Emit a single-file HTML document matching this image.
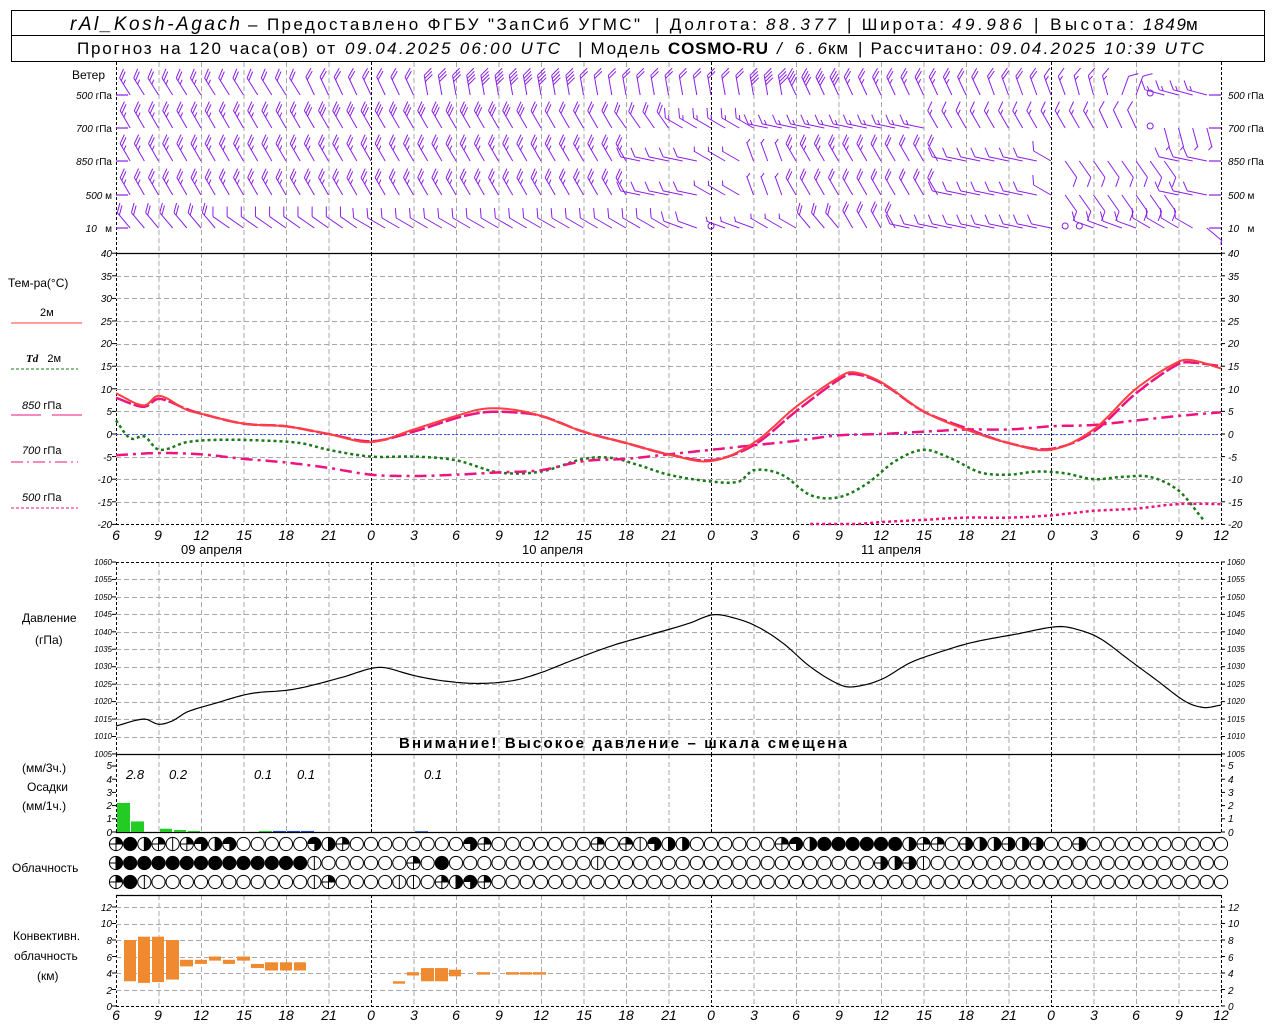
<!DOCTYPE html>
<html><head><meta charset="utf-8"><style>
html,body{margin:0;padding:0;background:#fff;}
svg{display:block;}
text{font-family:"Liberation Sans",sans-serif;fill:#000;}
.it{font-style:italic;}
.sm{font-size:10px;font-style:italic;}
.tl{font-size:14px;font-style:italic;text-anchor:middle;}
.lab{font-size:12px;}
</style></head><body>
<svg id="s" width="1280" height="1024" viewBox="0 0 1280 1024" xmlns="http://www.w3.org/2000/svg">
<rect x="0" y="0" width="1280" height="1024" fill="#fff"/>
<rect x="11.5" y="10.5" width="1253" height="51" fill="none" stroke="#000"/>
<line x1="11" y1="35.5" x2="1265" y2="35.5" stroke="#000"/>
<g font-size="17">
<text x="70" y="30" font-family="Liberation Serif" class="it" font-size="19" textLength="170">rAl_Kosh-Agach</text>
<text x="248" y="30" textLength="392">– Предоставлено ФГБУ "ЗапСиб УГМС"</text>
<text x="655" y="30" textLength="102">| Долгота:</text>
<text x="766" y="30" class="it" textLength="70">88.377</text>
<text x="847" y="30" textLength="97">| Широта:</text>
<text x="952" y="30" class="it" textLength="70">49.986</text>
<text x="1034" y="30" textLength="100">| Высота:</text>
<text x="1143" y="30" class="it" textLength="43">1849</text>
<text x="1186" y="30" textLength="14">м</text>
<text x="77" y="54" textLength="258">Прогноз на 120 часа(ов) от</text>
<text x="345" y="54" class="it" textLength="215">09.04.2025 06:00 UTC</text>
<text x="578" y="54" textLength="82">| Модель</text>
<text x="668" y="54" font-family="Liberation Serif" font-weight="bold" textLength="100">COSMO-RU</text>
<text x="777" y="54" class="it" textLength="50">/ 6.6</text>
<text x="828" y="54" textLength="20">км</text>
<text x="858" y="54" textLength="125">| Рассчитано:</text>
<text x="990" y="54" class="it" textLength="214">09.04.2025 10:39 UTC</text>
</g>
<g id="grid"></g>
<g id="data"></g>
<g class="sm">
<text x="72" y="79" font-style="normal" font-size="12">Ветер</text>
<text x="112" y="99" text-anchor="end">500 <tspan font-style="normal">гПа</tspan></text>
<text x="112" y="132" text-anchor="end">700 <tspan font-style="normal">гПа</tspan></text>
<text x="112" y="165" text-anchor="end">850 <tspan font-style="normal">гПа</tspan></text>
<text x="112" y="199" text-anchor="end">500 <tspan font-style="normal">м</tspan></text>
<text x="112" y="232" text-anchor="end">10 &#160; <tspan font-style="normal">м</tspan></text>
<text x="1228" y="99">500 <tspan font-style="normal">гПа</tspan></text>
<text x="1228" y="132">700 <tspan font-style="normal">гПа</tspan></text>
<text x="1228" y="165">850 <tspan font-style="normal">гПа</tspan></text>
<text x="1228" y="199">500 <tspan font-style="normal">м</tspan></text>
<text x="1228" y="232">10 &#160; <tspan font-style="normal">м</tspan></text>
</g>
<g class="lab">
<text x="8" y="287">Тем-ра(°С)</text>
<text x="40" y="316" font-size="11">2м</text>
<text x="26" y="362" font-size="11"><tspan font-family="Liberation Serif" font-style="italic" font-weight="bold">Td</tspan> &#160; 2м</text>
<text x="22" y="409" font-size="11"><tspan font-style="italic">850</tspan> гПа</text>
<text x="22" y="454" font-size="11"><tspan font-style="italic">700</tspan> гПа</text>
<text x="22" y="501" font-size="11"><tspan font-style="italic">500</tspan> гПа</text>
</g>
<line x1="11" y1="323" x2="82" y2="323" stroke="#ff4040" stroke-width="1"/>
<line x1="11" y1="369" x2="78" y2="369" stroke="#1a7a1a" stroke-dasharray="3,2"/>
<line x1="11" y1="415" x2="41" y2="415" stroke="#ee1480"/><line x1="52" y1="415" x2="82" y2="415" stroke="#ee1480"/>
<line x1="11" y1="462" x2="78" y2="462" stroke="#ee1480" stroke-dasharray="12,4,2,4"/>
<line x1="11" y1="508" x2="78" y2="508" stroke="#ee1480" stroke-dasharray="3,2"/>
<g class="sm" text-anchor="end">
<text x="112" y="257">40</text><text x="112" y="280">35</text><text x="112" y="302">30</text><text x="112" y="325">25</text><text x="112" y="347">20</text><text x="112" y="370">15</text><text x="112" y="393">10</text><text x="112" y="415">5</text><text x="112" y="438">0</text><text x="112" y="461">-5</text><text x="112" y="483">-10</text><text x="112" y="506">-15</text><text x="112" y="528">-20</text>
</g>
<g class="sm">
<text x="1228" y="257">40</text><text x="1228" y="280">35</text><text x="1228" y="302">30</text><text x="1228" y="325">25</text><text x="1228" y="347">20</text><text x="1228" y="370">15</text><text x="1228" y="393">10</text><text x="1228" y="415">5</text><text x="1228" y="438">0</text><text x="1228" y="461">-5</text><text x="1228" y="483">-10</text><text x="1228" y="506">-15</text><text x="1228" y="528">-20</text>
</g>
<g class="tl">
<text x="116" y="540">6</text><text x="158" y="540">9</text><text x="201" y="540">12</text><text x="244" y="540">15</text><text x="286" y="540">18</text><text x="329" y="540">21</text><text x="371" y="540">0</text><text x="414" y="540">3</text><text x="456" y="540">6</text><text x="499" y="540">9</text><text x="541" y="540">12</text><text x="584" y="540">15</text><text x="626" y="540">18</text><text x="669" y="540">21</text><text x="711" y="540">0</text><text x="754" y="540">3</text><text x="796" y="540">6</text><text x="839" y="540">9</text><text x="881" y="540">12</text><text x="924" y="540">15</text><text x="966" y="540">18</text><text x="1009" y="540">21</text><text x="1051" y="540">0</text><text x="1094" y="540">3</text><text x="1136" y="540">6</text><text x="1179" y="540">9</text><text x="1221" y="540">12</text>
<text x="116" y="1020">6</text><text x="158" y="1020">9</text><text x="201" y="1020">12</text><text x="244" y="1020">15</text><text x="286" y="1020">18</text><text x="329" y="1020">21</text><text x="371" y="1020">0</text><text x="414" y="1020">3</text><text x="456" y="1020">6</text><text x="499" y="1020">9</text><text x="541" y="1020">12</text><text x="584" y="1020">15</text><text x="626" y="1020">18</text><text x="669" y="1020">21</text><text x="711" y="1020">0</text><text x="754" y="1020">3</text><text x="796" y="1020">6</text><text x="839" y="1020">9</text><text x="881" y="1020">12</text><text x="924" y="1020">15</text><text x="966" y="1020">18</text><text x="1009" y="1020">21</text><text x="1051" y="1020">0</text><text x="1094" y="1020">3</text><text x="1136" y="1020">6</text><text x="1179" y="1020">9</text><text x="1221" y="1020">12</text>
</g>
<g font-size="13">
<text x="181" y="554">09 апреля</text><text x="522" y="554">10 апреля</text><text x="861" y="554">11 апреля</text>
</g>
<g class="lab"><text x="22" y="622">Давление</text><text x="35" y="644">(гПа)</text></g>
<g font-size="8" font-style="italic" text-anchor="end">
<text x="112" y="565">1060</text><text x="112" y="582">1055</text><text x="112" y="600">1050</text><text x="112" y="617">1045</text><text x="112" y="635">1040</text><text x="112" y="652">1035</text><text x="112" y="669">1030</text><text x="112" y="687">1025</text><text x="112" y="704">1020</text><text x="112" y="722">1015</text><text x="112" y="739">1010</text><text x="112" y="757">1005</text>
</g>
<g font-size="8" font-style="italic">
<text x="1227" y="565">1060</text><text x="1227" y="582">1055</text><text x="1227" y="600">1050</text><text x="1227" y="617">1045</text><text x="1227" y="635">1040</text><text x="1227" y="652">1035</text><text x="1227" y="669">1030</text><text x="1227" y="687">1025</text><text x="1227" y="704">1020</text><text x="1227" y="722">1015</text><text x="1227" y="739">1010</text><text x="1227" y="757">1005</text>
</g>
<text x="399" y="748" font-size="15" font-weight="bold" textLength="448">Внимание! Высокое давление – шкала смещена</text>
<g class="lab"><text x="22" y="772">(мм/3ч.)</text><text x="27" y="791">Осадки</text><text x="22" y="810">(мм/1ч.)</text></g>
<g class="sm" text-anchor="end"><text x="112" y="769">5</text><text x="112" y="783">4</text><text x="112" y="796">3</text><text x="112" y="809">2</text><text x="112" y="822">1</text><text x="112" y="836">0</text></g>
<g class="sm"><text x="1228" y="769">5</text><text x="1228" y="783">4</text><text x="1228" y="796">3</text><text x="1228" y="809">2</text><text x="1228" y="822">1</text><text x="1228" y="836">0</text></g>
<g font-size="13" font-style="italic"><text x="126" y="779">2.8</text><text x="169" y="779">0.2</text><text x="254" y="779">0.1</text><text x="297" y="779">0.1</text><text x="424" y="779">0.1</text></g>
<text x="12" y="872" class="lab">Облачность</text>
<g class="lab"><text x="13" y="940">Конвективн.</text><text x="14" y="960">облачность</text><text x="37" y="980">(км)</text></g>
<g class="sm" text-anchor="end"><text x="112" y="911">12</text><text x="112" y="927">10</text><text x="112" y="944">8</text><text x="112" y="961">6</text><text x="112" y="977">4</text><text x="112" y="994">2</text><text x="112" y="1010">0</text></g>
<g class="sm"><text x="1228" y="911">12</text><text x="1228" y="927">10</text><text x="1228" y="944">8</text><text x="1228" y="961">6</text><text x="1228" y="977">4</text><text x="1228" y="994">2</text><text x="1228" y="1010">0</text></g>
</svg>
<script>
(function(){
var NS="http://www.w3.org/2000/svg";
var G=document.getElementById('grid'),D=document.getElementById('data');
function el(p,tag,a){var e=document.createElementNS(NS,tag);for(var k in a)e.setAttribute(k,a[k]);p.appendChild(e);return e;}
function X(h){return 116+h*14.1667;}
function ln(p,x1,y1,x2,y2,st,w,da){var a={x1:x1,y1:y1,x2:x2,y2:y2,stroke:st,'stroke-width':w||1};if(da)a['stroke-dasharray']=da;return el(p,'line',a);}
var sections=[[62,253],[253,524],[562,754],[754,832],[895,1006]];
for(var h=0;h<=78;h+=3){var x=X(h)+0.5;var mid=(h%24==18)||h==0||h==78;
 sections.forEach(function(s){ln(G,x,s[0],x,s[1],mid?'#000':'#a8a8a8',1,mid?'3,2':'5,3');});}
for(var t=35;t>=-15;t-=5){var y=Math.round(434-t*4.52)+0.5;ln(G,116,y,1221,y,'#a8a8a8',1,'5,3');}
ln(G,116,524.5,1221,524.5,'#000',1,'3,2');
for(var p=1055;p>=1010;p-=5){var y=Math.round(562+(1060-p)*3.49)+0.5;ln(G,116,y,1221,y,'#a8a8a8',1,'5,3');}
ln(G,116,562.5,1221,562.5,'#000',1,'3,2');
for(var k=2;k<=12;k+=2){var y=Math.round(1006-k*8.25)+0.5;ln(G,116,y,1221,y,'#a8a8a8',1,'5,3');}
ln(G,116,1006.5,1221,1006.5,'#000',1,'3,2');
[253.5,754.5,832.5,895.5].forEach(function(y){ln(G,116,y,1221,y,'#000',1.2);});
function ticks(ys){ys.forEach(function(y){ln(G,112,y,116,y,'#000');ln(G,1221,y,1225,y,'#000');});}
var ty=[];for(var t=40;t>=-20;t-=5)ty.push(434-t*4.52);ticks(ty);
ty=[];for(var p=1060;p>=1005;p-=5)ty.push(562+(1060-p)*3.49);ticks(ty);
ty=[];for(var v=0;v<=5;v++)ty.push(832-v*13.2);ticks(ty);
ty=[];for(var k=0;k<=12;k+=2)ty.push(1006-k*8.25);ticks(ty);
ln(D,116,434.5,1221,434.5,'#3050ff',1,'2,2');
function interp(pts,h){for(var i=0;i<pts.length-1;i++){if(h>=pts[i][0]&&h<=pts[i+1][0]){var a=pts[i],b=pts[i+1];var p0=pts[i-1]||a,p3=pts[i+2]||b;var t=(h-a[0])/(b[0]-a[0]);
 var m1=(b[1]-p0[1])/((b[0]-p0[0])||1)*(b[0]-a[0]),m2=(p3[1]-a[1])/((p3[0]-a[0])||1)*(b[0]-a[0]);
 var t2=t*t,t3=t2*t;return (2*t3-3*t2+1)*a[1]+(t3-2*t2+t)*m1+(-2*t3+3*t2)*b[1]+(t3-t2)*m2;}}return null;}
function curve(pts,fy,st,w,da,h0,h1){var d='';for(var h=h0;h<=h1+1e-6;h+=0.25){var v=interp(pts,h);if(v==null)continue;var y=fy(v);d+=(d?'L':'M')+X(h).toFixed(1)+','+y.toFixed(1);}var a={d:d,fill:'none',stroke:st,'stroke-width':w};if(da)a['stroke-dasharray']=da;el(D,'path',a);}
var TY=function(t){return Math.min(524,434-t*4.52);};
var T2=[[0,9],[2,6.3],[3,8.5],[5,5.3],[6,4.5],[9,2.3],[12,1.7],[15,0],[18,-1.8],[21,1],[24,4],[26,5.6],[28,5.4],[30,4],[33,0.5],[36,-2],[39,-4.5],[42,-6],[45,-2],[48,6],[51,12.5],[52,13.7],[54,11.5],[57,5],[60,1],[63,-2],[66,-3.5],[69,1],[72,10],[75,16],[76,16.3],[78,14.5]];
var T850=[[0,8],[2,6],[3,7.8],[5,5.5],[6,4.5],[9,2.3],[12,1.7],[15,0],[18,-1.6],[21,0.5],[24,3.5],[26,4.8],[28,4.8],[30,4],[33,0.5],[36,-2],[39,-4.5],[42,-5.8],[45,-2.5],[48,5],[51,12],[52,13.3],[54,11.3],[57,5],[60,1.3],[63,-2],[66,-3.3],[69,0.5],[72,9],[75,15.5],[76,15.8],[78,15]];
var TD=[[0,3],[1,-1],[2,-0.5],[3,-3.5],[5,-1.8],[7,-1.3],[10,-1.4],[13,-2],[15,-3.5],[18,-5],[21,-5],[24,-5.8],[27,-8.5],[30,-8.3],[33,-5.5],[35,-5.3],[37,-7],[39,-9],[42,-10.5],[44,-10.5],[45,-8],[47,-9],[49,-13.5],[51,-14],[53,-11],[55,-6],[57,-3.5],[59,-5.5],[61,-8.5],[63,-9],[65,-8.3],[67,-8.7],[69,-10],[71,-9.5],[73,-9.5],[75,-12.5],[76.5,-18],[78,-24]];
var T700=[[0,-4.7],[3,-4.2],[6,-4.5],[9,-5.5],[12,-6.3],[15,-7.5],[18,-9],[21,-9.3],[24,-9],[27,-8.5],[30,-8],[33,-6],[36,-5.5],[39,-4.5],[42,-3.5],[45,-2.5],[48,-1.5],[51,-0.3],[54,0],[57,0.5],[60,1],[63,1],[66,1.7],[69,2],[72,3],[75,4],[78,4.8]];
var T500=[[48,-20],[51,-20.2],[54,-19.5],[57,-19],[60,-18.5],[63,-18.5],[66,-18],[69,-17],[72,-16.5],[75,-15.5],[78,-15.5]];
curve(TD,TY,'#1a7a1a',2.5,'3,3',0,76.8);
curve(T700,TY,'#ee1480',2.5,'12,5,3,5',0,78);
curve(T500,TY,'#ee1480',2.5,'3,3',49,78);
curve(T850,TY,'#ee1480',2.5,'16,3',0,78);
curve(T2,TY,'#ff4040',2,null,0,78);
var PR=[[0,1013],[2,1015],[3,1013.5],[4,1014.5],[5,1017],[7,1019.5],[9.5,1022.3],[12.5,1023.5],[16,1027],[18,1029.5],[19,1029.7],[21,1027.5],[23,1026],[25.5,1025.2],[28,1026],[30,1028.3],[32,1031.5],[35,1036],[38,1039.5],[40.5,1042.5],[42,1044.8],[43,1044.6],[45,1042],[47,1037],[49,1030],[51,1025],[52,1024.2],[54,1026.3],[56,1031],[58,1034],[60.5,1037],[63.5,1039.3],[66.5,1041.5],[68,1040.5],[69.5,1038],[71.5,1032],[73.5,1026],[75.5,1020],[76.8,1018.3],[78,1019]];
curve(PR,function(p){return 562+(1060-p)*3.49;},'#000',1.2,null,0,78);
function bar(x0,x1,v,c){var y=832-v*13.2;el(D,'rect',{x:x0,y:y,width:x1-x0,height:832-y,fill:c});}
bar(117,130,2.2,'#22cc22');bar(131,144,0.8,'#22cc22');bar(160,172,0.25,'#22cc22');bar(174,186,0.15,'#22cc22');bar(188,200,0.08,'#22cc22');bar(259,272,0.08,'#22cc22');bar(273,286,0.08,'#2244cc');bar(287,300,0.08,'#2244cc');bar(301,314,0.08,'#2244cc');bar(415,428,0.06,'#2244cc');
var C=[[124,137,3,8],[138,151,2.8,8.4],[152,165,2.9,8.4],[166,180,3.2,8],[180,194,4.8,5.6],[195,208,5.1,5.6],[209,222,5.5,6],[223,236,5.1,5.6],[237,251,5.5,6],[251,265,4.6,5.1],[265,279,4.3,5.3],[280,293,4.3,5.3],[294,307,4.3,5.3],[393,406,2.7,3],[407,420,3.7,4.1],[421,435,3,4.6],[435,449,3,4.6],[449,462,3.6,4.4],[477,491,3.8,4.1],[506,520,3.8,4.1],[520,533,3.8,4.1],[533,547,3.8,4.1]];
C.forEach(function(c){var y1=1006-c[3]*8.25,y0=1006-c[2]*8.25;el(D,'rect',{x:c[0],y:y1,width:c[1]-c[0]-1,height:y0-y1,fill:'#f08a30'});});
function row(spec){var a=[];for(var i=0;i<79;i++)a.push('0');for(var k in spec)a[k]=spec[k];return a;}
var R1=row({0:'1',1:'4',2:'2',3:'1',4:'v',5:'1',6:'3',7:'2',8:'3',14:'3',15:'2',16:'1',25:'3',26:'1',34:'1',36:'1',37:'v',38:'3',39:'2',40:'2',47:'1',48:'3',49:'2',50:'4',51:'4',52:'4',53:'4',54:'4',55:'4',56:'2',57:'1',58:'1',60:'h',61:'2',62:'2',63:'h',64:'2',65:'h',68:'h'});
var R2=row({0:'h',14:'v',21:'1',23:'4',34:'v',54:'h',55:'2',56:'h',57:'v'});
for(var i=1;i<=13;i++)R2[i]='4';
var R3=row({0:'1',1:'4',2:'v',14:'v',15:'1',20:'v',21:'v',23:'1',24:'2',25:'3',26:'1'});
function circ(cx,cy,t){var r=6.6;
 if(t=='4'){el(D,'circle',{cx:cx,cy:cy,r:r,fill:'#000',stroke:'#000'});return;}
 el(D,'circle',{cx:cx,cy:cy,r:r,fill:'#fff',stroke:'#000','stroke-width':1});
 if(t=='1')el(D,'path',{d:'M'+cx+','+cy+'L'+cx+','+(cy-r)+'A'+r+','+r+' 0 0 1 '+(cx+r)+','+cy+'Z',fill:'#000'});
 if(t=='2'||t=='h')el(D,'path',{d:'M'+cx+','+(cy-r)+'A'+r+','+r+' 0 0 1 '+cx+','+(cy+r)+'Z',fill:'#000'});
 if(t=='3')el(D,'path',{d:'M'+cx+','+cy+'L'+(cx-r)+','+cy+'A'+r+','+r+' 0 1 1 '+cx+','+(cy+r)+'Z',fill:'#000'});
 if(t=='v'||t=='1'||t=='2'||t=='h')ln(D,cx,cy-r,cx,cy+r,'#000',1);
 if(t=='h'||t=='1')ln(D,cx-r,cy,cx+r,cy,'#000',1);}
for(var i=0;i<79;i++){var cx=X(i);circ(cx,844,R1[i]);circ(cx,863,R2[i]);circ(cx,882,R3[i]);}
var WC='#8b1ee6';
function step(pts,h){var v=pts[0][1];for(var i=0;i<pts.length;i++){if(h>=pts[i][0])v=pts[i][1];}return v;}
function barb(x,y,d,s){if(d<0){el(D,'circle',{cx:x,cy:y-2,r:3,fill:'none',stroke:WC});return;}
 var L=20,r=d*Math.PI/180,ux=Math.sin(r),uy=-Math.cos(r);
 var tx=x+ux*L,ty=y+uy*L;ln(D,x,y,tx,ty,WC,1);
 var fr=(d+55)*Math.PI/180,fx=Math.sin(fr),fy=-Math.cos(fr);
 var pos=0;for(var n=0;n<Math.floor(s);n++){var px=tx-ux*pos,py=ty-uy*pos;ln(D,px,py,px+fx*10,py+fy*10,WC,1);pos+=3.2;}
 if(s%1){var px=tx-ux*(pos+1),py=ty-uy*(pos+1);ln(D,px,py,px+fx*5,py+fy*5,WC,1);}}
var rows=[
 {y:95,d:[[0,328],[14,335],[22,350],[48,335],[62,340],[68,345],[71,20],[73,-1],[74,285]],s:[[0,2.5],[8,2],[22,3],[25,4],[33,2],[45,4],[52,2.5],[60,2],[66,1.5],[71,1],[74,1.5]]},
 {y:128,d:[[0,330],[36,325],[40,300],[46,282],[57,282],[58,330],[70,335],[73,-1],[74,165]],s:[[0,2.5],[14,3],[30,2],[40,1.5],[58,1.5],[70,1],[74,0.5]]},
 {y:161,d:[[0,330],[37,282],[42,300],[45,340],[48,330],[54,330],[59,282],[66,300],[67,145],[75,282]],s:[[0,2.5],[37,1],[42,0.5],[48,2.5],[54,2],[59,1],[67,1],[75,1]]},
 {y:195,d:[[0,330],[37,282],[42,300],[45,340],[48,330],[54,330],[59,282],[66,300],[67,145],[75,282]],s:[[0,2.5],[37,1],[42,0.5],[48,2],[54,2],[59,1],[67,1],[75,1]]},
 {y:228,d:[[0,320],[8,305],[18,300],[30,300],[40,290],[42,-1],[43,290],[46,300],[49,320],[52,330],[56,282],[67,-1],[69,290],[73,300],[77,130]],s:[[0,2],[8,1],[30,1],[43,0.5],[49,2],[52,2],[56,1],[69,1],[77,0.5]]}];
rows.forEach(function(R){ln(D,116,R.y,128,R.y,WC,1.2);ln(D,1209,R.y,1221,R.y,WC,1.2);
 for(var i=1;i<=77;i++){barb(X(i),R.y,step(R.d,i),step(R.s,i));}});
})();
</script>
</body></html>
